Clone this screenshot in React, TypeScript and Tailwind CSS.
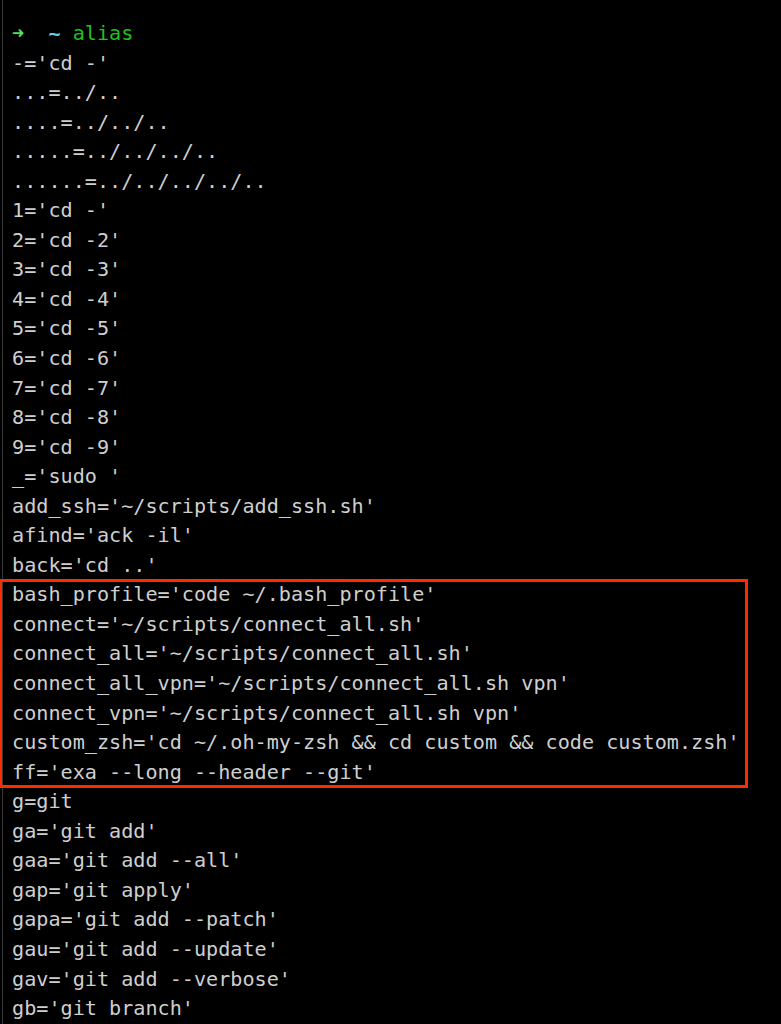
const before = [
  "-='cd -'",
  "...=../..",
  "....=../../..",
  ".....=../../../..",
  "......=../../../../..",
  "1='cd -'",
  "2='cd -2'",
  "3='cd -3'",
  "4='cd -4'",
  "5='cd -5'",
  "6='cd -6'",
  "7='cd -7'",
  "8='cd -8'",
  "9='cd -9'",
  "_='sudo '",
  "add_ssh='~/scripts/add_ssh.sh'",
  "afind='ack -il'",
  "back='cd ..'",
]

const marked = [
  "bash_profile='code ~/.bash_profile'",
  "connect='~/scripts/connect_all.sh'",
  "connect_all='~/scripts/connect_all.sh'",
  "connect_all_vpn='~/scripts/connect_all.sh vpn'",
  "connect_vpn='~/scripts/connect_all.sh vpn'",
  "custom_zsh='cd ~/.oh-my-zsh && cd custom && code custom.zsh'",
  "ff='exa --long --header --git'",
]

const after = [
  "g=git",
  "ga='git add'",
  "gaa='git add --all'",
  "gap='git apply'",
  "gapa='git add --patch'",
  "gau='git add --update'",
  "gav='git add --verbose'",
  "gb='git branch'",
]

const Line = ({ text }: { text: string }) => (
  <div className="h-[29.55px] leading-[29.55px] whitespace-pre">{text}</div>
)

const App = () => {
  return (
    <div className="w-[781px] h-[1024px] bg-black overflow-hidden">
      <div className="h-full ml-[2px] border-l border-[#3a3a3a] pl-[9px] pt-[19px] text-[20.15px] text-[#cfcfcf] font-['DejaVu_Sans_Mono',monospace]">
        <div className="h-[29.55px] leading-[29.55px] whitespace-pre">
          <span className="text-[#4ee15f] font-bold">➜</span>
          {"  "}
          <span className="text-[#5fd3e3] font-bold">~</span>{" "}
          <span className="text-[#1fc21f]">alias</span>
        </div>
        {before.map((t) => (
          <Line key={t} text={t} />
        ))}
        <div className="-ml-[12px] pl-[12px] w-[747px] outline-[3px] outline-solid outline-[#ff2a00] -outline-offset-[2px]">
          {marked.map((t) => (
            <Line key={t} text={t} />
          ))}
        </div>
        {after.map((t) => (
          <Line key={t} text={t} />
        ))}
      </div>
    </div>
  )
}

export default App
